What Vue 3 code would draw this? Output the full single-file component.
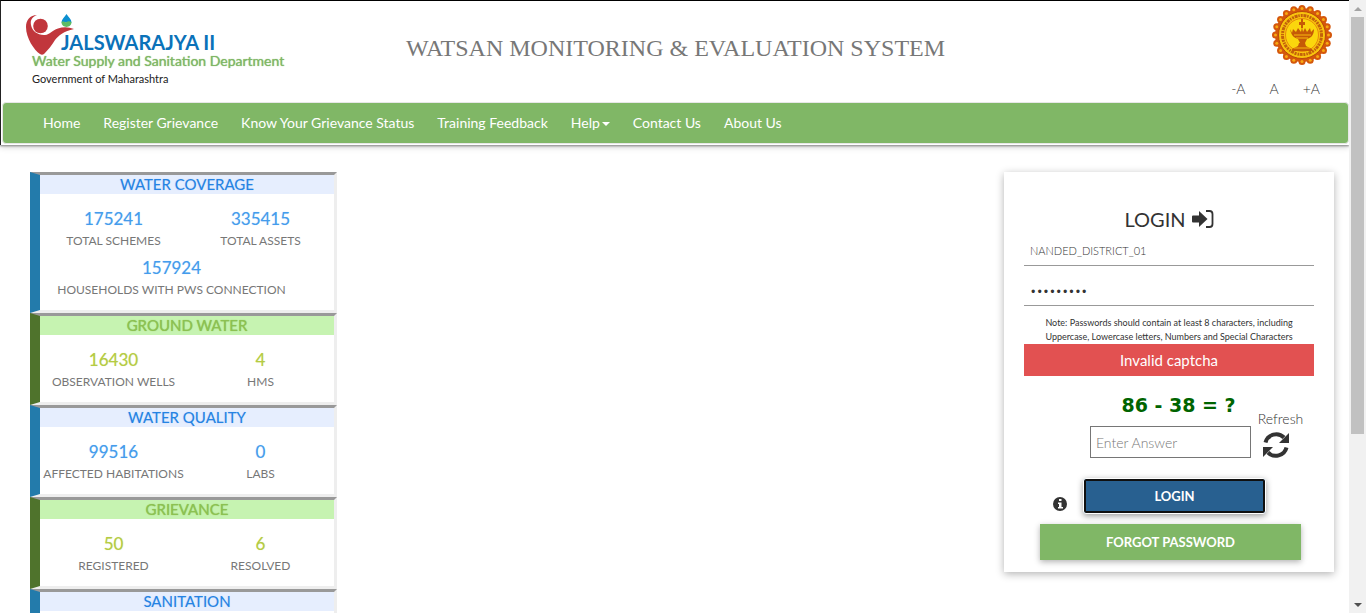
<script setup>
import { ref } from 'vue'

const navItems = [
  { label: 'Home' },
  { label: 'Register Grievance' },
  { label: 'Know Your Grievance Status' },
  { label: 'Training Feedback' },
  { label: 'Help', menu: true },
  { label: 'Contact Us' },
  { label: 'About Us' },
]

const panels = [
  {
    title: 'WATER COVERAGE',
    tone: 'blue',
    stats: [
      { value: '175241', label: 'TOTAL SCHEMES' },
      { value: '335415', label: 'TOTAL ASSETS' },
      { value: '157924', label: 'HOUSEHOLDS WITH PWS CONNECTION', wide: true },
    ],
  },
  {
    title: 'GROUND WATER',
    tone: 'green',
    stats: [
      { value: '16430', label: 'OBSERVATION WELLS' },
      { value: '4', label: 'HMS' },
    ],
  },
  {
    title: 'WATER QUALITY',
    tone: 'blue',
    stats: [
      { value: '99516', label: 'AFFECTED HABITATIONS' },
      { value: '0', label: 'LABS' },
    ],
  },
  {
    title: 'GRIEVANCE',
    tone: 'green',
    stats: [
      { value: '50', label: 'REGISTERED' },
      { value: '6', label: 'RESOLVED' },
    ],
  },
  { title: 'SANITATION', tone: 'blue', stats: [] },
]

const teeth = Array.from({ length: 20 }, (_, i) => {
  const a = (i * Math.PI) / 10
  return { x: 30 + 26.5 * Math.cos(a), y: 31 + 26.5 * Math.sin(a) }
})

const username = ref('NANDED_DISTRICT_01')
const password = ref('password1')
const answer = ref('')
</script>

<template>
  <div class="shell">
    <div class="page">
      <header class="top">
        <div class="brand-row">
          <div class="brand">
            <div class="logo">
              <svg class="logo-mark" viewBox="0 0 48 42" aria-hidden="true">
                <path d="M11 1C4 1 0 6 0 13c0 11 8 23 14 27q2 1.500 4 0c4-4 8-9 11-14c3-4 9-9 19-11q-8-3-16-.5c-6 2-8 6-13 6.500c-7 .5-13-4-14-10c-1-5 1-8 6-10z" fill="#c1363c" />
                <circle cx="14.500" cy="12" r="7.300" fill="#c1363c" />
                <path d="M40.500 0c-2 3-5 5.500-5 8.500h10c0-3-3-5.500-5-8.500z" fill="#0b8fd0" />
                <path d="M35.500 8c2-1.500 3.500 1 5 0s3-1 5 0c0 6.500-10 6.500-10 0z" fill="#5dbb63" />
              </svg>
              <span class="logo-text">JALSWARAJYA II</span>
            </div>
            <div class="dept">Water Supply and Sanitation Department</div>
            <div class="gov">Government of Maharashtra</div>
          </div>
          <h1>WATSAN MONITORING &amp; EVALUATION SYSTEM</h1>
          <div class="tools">
            <svg class="seal" viewBox="0 0 60 62" role="img" aria-label="Government of Maharashtra seal">
              <circle v-for="(t, i) in teeth" :key="i" :cx="t.x" :cy="t.y" r="3.500" fill="#d4570c" />
              <circle cx="30" cy="31" r="27" fill="#d4570c" />
              <circle v-for="(t, i) in teeth" :key="'d' + i" :cx="t.x" :cy="t.y" r="1.500" fill="#f7a912" />
              <circle cx="30" cy="31" r="23.500" fill="#f9c40e" stroke="#b94a08" />
              <circle cx="30" cy="31" r="19.500" fill="none" stroke="#b5480b" stroke-width="3" stroke-dasharray="2 .8 3 .7 1.500 1" opacity=".8" />
              <circle cx="30" cy="31" r="16.500" fill="#fbd60d" stroke="#e88a0a" />
              <g fill="#c65a06">
                <path d="M29 15h2v3h2v3h-2v3h-2v-3h-2v-3h2z" />
                <path d="M18 25c1 6 4 9 8 10l2 4h5l2-4c4-1 7-4 7-10l-3 3-1-4-3 4-2-4-2 4-1-5-1 5-3-4-2 4-3-3-1 4z" />
                <path d="M27 39h6l1 3 6 3v2H20v-2l6-3z" />
              </g>
              <path d="M22 31h17M24 34h12M22 44h16" stroke="#f8b80c" fill="none" />
            </svg>
            <div class="sizes">
              <button type="button">-A</button>
              <button type="button">A</button>
              <button type="button">+A</button>
            </div>
          </div>
        </div>
        <nav>
          <a v-for="n in navItems" :key="n.label" href="#">{{ n.label }}<span v-if="n.menu" class="caret"></span></a>
        </nav>
      </header>

      <main>
        <div class="panels">
          <section v-for="p in panels" :key="p.title" class="panel" :class="p.tone">
            <h2>{{ p.title }}</h2>
            <div class="stats">
              <div v-for="s in p.stats" :key="s.label" class="stat" :class="{ wide: s.wide }">
                <div class="value">{{ s.value }}</div>
                <div class="label">{{ s.label }}</div>
              </div>
            </div>
          </section>
        </div>

        <form class="login" @submit.prevent>
          <h2>
            LOGIN
            <svg viewBox="0 0 22 18" aria-hidden="true">
              <path d="M1 5.500h6V1L15.500 9L7 17v-4.500H1q-1 0-1-1v-5q0-1 1-1z" fill="#333" />
              <path d="M14 1h3.500a3 3 0 0 1 3 3v10a3 3 0 0 1-3 3H14" fill="none" stroke="#333" stroke-width="1.800" />
            </svg>
          </h2>
          <input v-model="username" class="line" type="text" aria-label="Username" />
          <input v-model="password" class="line second" type="password" aria-label="Password" />
          <p class="note">Note: Passwords should contain at least 8 characters, including<br />Uppercase, Lowercase letters, Numbers and Special Characters</p>
          <div class="alert" role="alert">Invalid captcha</div>
          <div class="captcha">
            <div class="answer">
              <label for="answer">86 - 38 = ?</label>
              <input id="answer" v-model="answer" type="text" placeholder="Enter Answer" />
            </div>
            <button class="refresh" type="button">
              <span>Refresh</span>
              <svg viewBox="0 0 26 26" aria-hidden="true">
                <path d="M2.500 10.500A11 11 0 0 1 21 5.500" fill="none" stroke="#333" stroke-width="4" />
                <path d="M26 1v10H16z" fill="#333" />
                <path d="M23.500 15.500A11 11 0 0 1 5 20.500" fill="none" stroke="#333" stroke-width="4" />
                <path d="M0 25V15h10z" fill="#333" />
              </svg>
            </button>
          </div>
          <div class="submit-row">
            <svg class="info" viewBox="0 0 14 14" aria-hidden="true">
              <circle cx="7" cy="7" r="7" fill="#333" />
              <path d="M6 2h2.500v2H6zM5 5.500h3.500V10H10v1.500H5V10h1V7H5z" fill="#fff" />
            </svg>
            <button class="submit" type="submit">LOGIN</button>
          </div>
          <button class="forgot" type="button">FORGOT PASSWORD</button>
        </form>
      </main>
    </div>

    <div class="scrollbar" aria-hidden="true">
      <span class="arrow up"></span>
      <span class="thumb"></span>
      <span class="arrow down"></span>
    </div>
  </div>
</template>

<style>
body {
  background: #fff;
}
</style>

<style scoped>
* {
  box-sizing: border-box;
}
.shell {
  display: flex;
  height: 100vh;
  overflow: hidden;
  font-family: Lato, "Open Sans", sans-serif;
  font-size: 14px;
  color: #333;
}
.page {
  flex: 1;
  min-width: 0;
  overflow: hidden;
}
button,
input {
  font-family: inherit;
}
button {
  border: 0;
  padding: 0;
  background: none;
  cursor: pointer;
}
.top {
  border-top: 1px solid #000;
  border-left: 1px solid #222;
  padding-left: 1px;
  padding-bottom: 1px;
  box-shadow: 0 1px 2px #888, 0 2px 6px #ccc;
}
.brand-row {
  display: grid;
  grid-template-columns: 1fr auto 1fr;
  height: 101px;
}
.brand {
  padding: 13px 0 0 24px;
}
.logo {
  display: flex;
  height: 39px;
}
.logo-mark {
  flex: none;
  width: 48px;
  height: 42px;
}
.logo-text {
  margin: 16px 0 0 -13px;
  font-size: 20px;
  line-height: 24px;
  font-weight: 700;
  color: #0b72b9;
  white-space: nowrap;
}
.dept {
  padding-left: 6px;
  font-size: 14px;
  line-height: 16px;
  color: #80b766;
  text-shadow: 0 0 1px #80b766;
  white-space: nowrap;
}
.gov {
  padding-left: 6px;
  font-size: 11px;
  line-height: 20px;
  color: #222;
}
h1 {
  margin: 32px 0 0;
  font: 24px/30px "Liberation Serif", serif;
  color: #777;
}
.tools {
  display: flex;
  flex-direction: column;
  align-items: flex-end;
  padding: 3px 17px 0 0;
}
.seal {
  width: 60px;
  height: 62px;
}
.sizes {
  display: flex;
  gap: 24px;
  padding: 14px 12px 0 0;
}
.sizes button {
  font-size: 14px;
  line-height: 18px;
  font-weight: 300;
  color: #333;
}
nav {
  display: flex;
  align-items: center;
  gap: 23px;
  height: 42px;
  padding-left: 40px;
  border: 1px solid #e7e7e7;
  border-radius: 4px;
  background: #80b766;
}
nav a {
  font-size: 14px;
  line-height: 20px;
  color: #fff;
  text-decoration: none;
  white-space: nowrap;
}
.caret {
  display: inline-block;
  margin-left: 2px;
  vertical-align: middle;
  border: 4px solid transparent;
  border-top-color: #fff;
  border-bottom: 0;
}
main {
  display: flex;
  justify-content: space-between;
  align-items: flex-start;
  padding: 27px 15px 0 30px;
}
.panels {
  width: 307px;
}
.panel {
  border: 3px solid #eee;
  border-top-color: #999;
  border-left: 10px solid #237bab;
}
.panel.green {
  border-left-color: #4f732c;
}
.panel h2 {
  margin: 0;
  font-size: 15px;
  line-height: 19px;
  font-weight: 400;
  text-align: center;
  color: #2583e3;
  background: #e6eefe;
  text-shadow: 0 0 1px #a5c8f5;
}
.panel.green h2 {
  color: #8cc152;
  background: #c6f3b1;
  text-shadow: 0 0 1px #8cc152;
}
.stats {
  display: flex;
  flex-wrap: wrap;
  row-gap: 5px;
  min-height: 67px;
  padding: 12px 0 11px;
}
.stat {
  width: 50%;
  text-align: center;
}
.stat.wide {
  width: 100%;
  padding-right: 31px;
}
.value {
  font-size: 17px;
  line-height: 26px;
  color: #449cec;
  text-shadow: 0 0 1px #b5d6f7;
}
.green .value {
  color: #b5cb42;
  text-shadow: 0 0 1px #d9e5a0;
}
.label {
  font-size: 12px;
  line-height: 18px;
  color: #777;
  white-space: nowrap;
}
.login {
  width: 330px;
  padding: 30px 20px 12px;
  background: #fff;
  box-shadow: 0 2px 8px rgba(0, 0, 0, 0.3);
}
.login h2 {
  display: flex;
  align-items: center;
  justify-content: center;
  gap: 6px;
  margin: 0;
  font-size: 20px;
  line-height: 34px;
  font-weight: 400;
}
.login h2 svg {
  width: 22px;
  height: 18px;
}
.line {
  display: block;
  width: 100%;
  height: 30px;
  padding: 0 6px;
  border: 0;
  border-bottom: 1px solid #999;
  outline: 0;
  font-size: 11px;
  font-weight: 300;
  color: #333;
}
.second {
  margin-top: 10px;
}
.note {
  margin: 10px 0 0;
  font-size: 9px;
  line-height: 14px;
  text-align: center;
}
.alert {
  font-size: 15px;
  line-height: 32px;
  text-align: center;
  color: #fff;
  background: #e25151;
}
.captcha {
  display: flex;
  align-items: flex-end;
  gap: 6px;
  padding: 19px 0 0 66px;
}
.answer {
  width: 161px;
}
.answer label {
  display: block;
  padding-left: 16px;
  text-align: center;
  font: bold 19px/20px "DejaVu Sans", sans-serif;
  color: #006400;
  white-space: nowrap;
}
.answer input {
  display: block;
  width: 100%;
  height: 32px;
  margin-top: 11px;
  padding: 0 5px;
  border: 1px solid #767676;
  font-size: 14px;
  font-weight: 300;
}
.answer input::placeholder {
  color: #777;
}
.refresh {
  display: flex;
  flex-direction: column;
  align-items: center;
  gap: 4px;
  width: 47px;
  color: #333;
}
.refresh span {
  font-size: 14px;
  line-height: 18px;
  font-weight: 300;
}
.refresh svg {
  width: 26px;
  height: 26px;
  margin-right: 9px;
}
.submit-row {
  display: flex;
  align-items: flex-end;
  gap: 16px;
  padding: 20px 0 0 29px;
}
.info {
  width: 14px;
  height: 14px;
  margin-bottom: 3px;
}
.submit {
  width: 183px;
  height: 36px;
  border: 1px solid #fff;
  border-radius: 3px;
  box-shadow: inset 0 0 0 2px #101010, 0 2px 6px rgba(0, 0, 0, 0.4);
  font-size: 13px;
  font-weight: 700;
  color: #fff;
  background: #286090;
}
.forgot {
  display: block;
  width: 261px;
  height: 36px;
  margin: 10px 0 0 16px;
  box-shadow: 0 2px 6px rgba(0, 0, 0, 0.3);
  font-size: 13px;
  font-weight: 700;
  color: #fff;
  background: #80b766;
}
.scrollbar {
  display: flex;
  flex-direction: column;
  align-items: center;
  width: 17px;
  background: #f1f1f1;
}
.thumb {
  width: 13px;
  height: 68%;
  background: #c1c1c1;
}
.arrow {
  margin: 7px 0 6px;
  border: 4px solid transparent;
}
.up {
  border-top: 0;
  border-bottom-color: #a3a3a3;
}
.down {
  margin-top: auto;
  border-bottom: 0;
  border-top-color: #505050;
}
</style>
